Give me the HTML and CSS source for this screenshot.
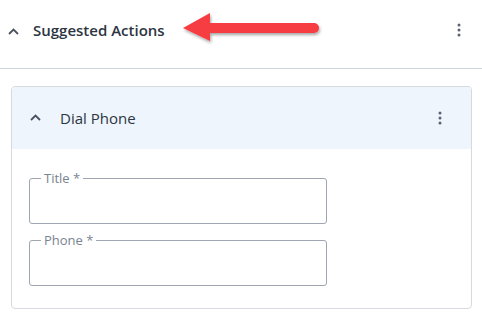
FILE: index.html
```html
<!DOCTYPE html>
<html>
<head>
<meta charset="utf-8">
<link rel="stylesheet" href="styles.css">
</head>
<body>
<div class="panel">
  <div class="panel-header">
    <svg class="chev" width="11" height="7" viewBox="0 0 11 7"><path d="M1 6 L5.5 1.5 L10 6" fill="none" stroke="#4a5260" stroke-width="1.8"/></svg>
    <span class="panel-title">Suggested Actions</span>
    <svg class="kebab" width="4" height="14" viewBox="0 0 4 14"><circle cx="2" cy="2" r="1.5"/><circle cx="2" cy="7" r="1.5"/><circle cx="2" cy="12" r="1.5"/></svg>
    <svg class="arrow" width="150" height="40" viewBox="0 0 150 40">
      <defs><filter id="sh" x="-10%" y="-30%" width="120%" height="170%"><feDropShadow dx="1" dy="2" stdDeviation="1.5" flood-color="#000" flood-opacity="0.35"/></filter></defs>
      <g filter="url(#sh)" fill="#f63c42">
        <polygon points="8,20 35,5 35,33"/>
        <path d="M33 15 H139 a5 5 0 0 1 0 10 H33 Z"/>
      </g>
    </svg>
  </div>
  <div class="card">
    <div class="card-header">
      <svg class="chev" width="11" height="7" viewBox="0 0 11 7"><path d="M1 6 L5.5 1.5 L10 6" fill="none" stroke="#4a5260" stroke-width="1.8"/></svg>
      <span class="card-title">Dial Phone</span>
      <svg class="kebab" width="4" height="14" viewBox="0 0 4 14"><circle cx="2" cy="2" r="1.5"/><circle cx="2" cy="7" r="1.5"/><circle cx="2" cy="12" r="1.5"/></svg>
    </div>
    <div class="card-body">
      <fieldset class="field"><legend>Title *</legend></fieldset>
      <fieldset class="field"><legend>Phone *</legend></fieldset>
    </div>
  </div>
</div>
</body>
</html>
```
FILE: styles.css
```css
html, body {
  margin: 0;
  padding: 0;
  background: #fff;
  font-family: "Open Sans", "Noto Sans", sans-serif;
  color: #2c3542;
}
.panel {
  width: 482px;
  height: 316px;
}
.panel-header {
  position: relative;
  height: 68px;
  border-bottom: 1px solid #cfd5de;
  display: flex;
  align-items: center;
  padding: 0 0 0 8px;
}
.panel-header .chev {
  margin-top: -6px;
}
.panel-title {
  margin-left: 14px;
  font-size: 15px;
  font-weight: 600;
  margin-top: -8px;
}
.panel-header .kebab {
  margin-left: auto;
  margin-right: 21px;
  margin-top: -8px;
  fill: #5a6372;
}
.arrow {
  position: absolute;
  left: 175px;
  top: 8px;
}
.card {
  margin: 17px 10px 0 11px;
  border: 1px solid #d6dae0;
  border-radius: 4px;
  overflow: hidden;
}
.card-header {
  height: 62px;
  background: #eef5fd;
  display: flex;
  align-items: center;
  padding-left: 18px;
}
.card-header .chev {
  margin-top: -2px;
}
.card-title {
  margin-left: 19px;
  font-size: 15px;
  font-weight: 400;
}
.card-header .kebab {
  margin-left: auto;
  margin-right: 29px;
  fill: #5a6372;
}
.card-body {
  padding: 22px 17px 22px 17px;
  display: flex;
  flex-direction: column;
  gap: 9px;
}
.field {
  margin: 0;
  width: 298px;
  box-sizing: border-box;
  height: 53px;
  border: 1.5px solid #9ea6b2;
  border-radius: 3px;
  padding: 0 0 0 11px;
}
.field legend {
  padding: 0 3px;
  font-size: 13px;
  line-height: 14px;
  color: #7a8390;
}
```
